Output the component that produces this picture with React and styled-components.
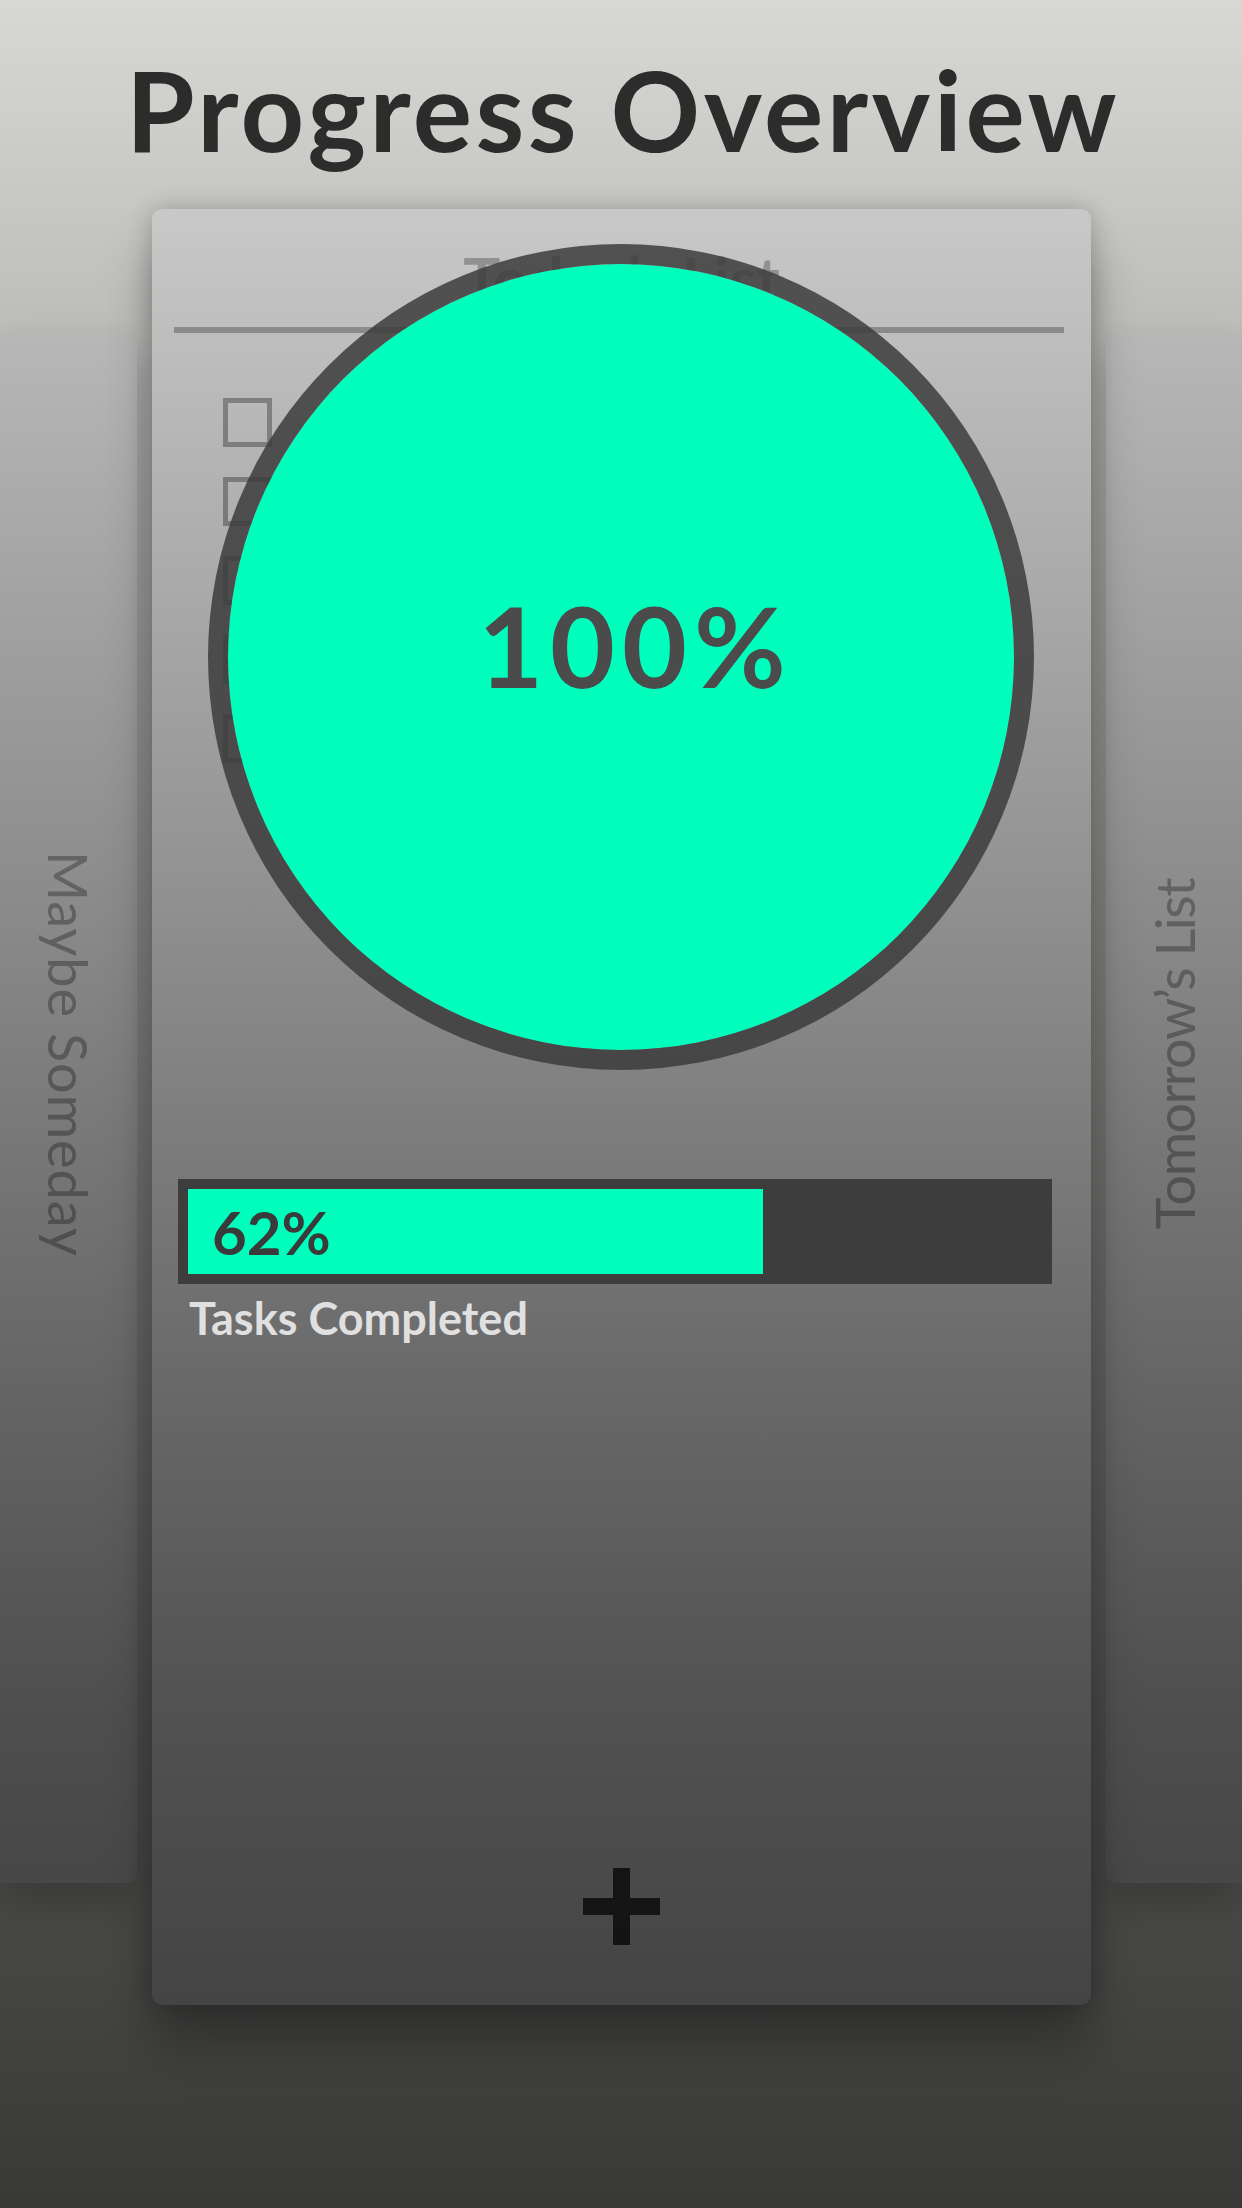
import React from 'react';
import styled, { createGlobalStyle, css } from 'styled-components';

const tasks = ['Buy groceries', 'Call the bank', 'Read a chapter', 'Finish tests', 'Water plants'];
const progress = { label: '62%', fill: 67.3 };

function App() {
  return (
    <>
      <GlobalStyle />
      <Screen>
        <Board>
          <SideCard side="left">
            <SideLabel>Maybe Someday</SideLabel>
          </SideCard>
          <ListCard>
            <ListTitle>Today’s List</ListTitle>
            <Rule />
            <TaskList>
              {tasks.map((t) => (
                <TaskRow key={t}>
                  <CheckBox />
                  <TaskText>{t}</TaskText>
                </TaskRow>
              ))}
            </TaskList>
            <AddButton aria-label="Add task">
              <svg width="77" height="77" viewBox="0 0 77 77">
                <rect x="30" y="0" width="17" height="77" fill="currentColor" />
                <rect x="0" y="30" width="77" height="17" fill="currentColor" />
              </svg>
            </AddButton>
          </ListCard>
          <SideCard side="right">
            <SideLabel flip spacing={-1.5}>Tomorrow’s List</SideLabel>
          </SideCard>
        </Board>

        <Dim />

        <Overview>
          <Heading>Progress Overview</Heading>
          <Ring>
            <Percent>100%</Percent>
          </Ring>
          <Meter>
            <MeterFill style={{ width: `${progress.fill}%` }}>
              <MeterValue>{progress.label}</MeterValue>
            </MeterFill>
          </Meter>
          <MeterLabel>Tasks Completed</MeterLabel>
        </Overview>
      </Screen>
    </>
  );
}

const GlobalStyle = createGlobalStyle`
  html, body {
    margin: 0;
    padding: 0;
  }
  body {
    background: #3a3a38;
    font-family: Lato, "Liberation Sans", sans-serif;
  }
`;

const Screen = styled.div`
  position: relative;
  width: 1242px;
  height: 2208px;
  overflow: hidden;
  background: #dadad6;
`;

const Board = styled.div`
  display: grid;
  grid-template-columns: 137px 1fr 136px;
  column-gap: 15px;
  align-items: start;
  padding-top: 209px;
`;

const SideCard = styled.div`
  margin-top: 124px;
  height: 1550px;
  box-sizing: border-box;
  padding-bottom: 108px;
  background: #d4d4d4;
  box-shadow: 0 20px 40px rgba(0, 0, 0, 0.22);
  display: flex;
  align-items: center;
  justify-content: center;
  ${(p) =>
    p.side === 'left'
      ? css`border-radius: 0 10px 10px 0;`
      : css`border-radius: 10px 0 0 10px;`}
`;

const SideLabel = styled.span`
  writing-mode: vertical-rl;
  font-size: 54px;
  font-weight: 400;
  letter-spacing: ${(p) => (p.spacing !== undefined ? p.spacing : 1)}px;
  color: #959595;
  white-space: nowrap;
  ${(p) =>
    p.flip &&
    css`
      transform: rotate(180deg);
    `}
`;

const ListCard = styled.div`
  position: relative;
  height: 1796px;
  box-sizing: border-box;
  padding: 32px 24px 60px;
  background: #dcdcdc;
  border-radius: 10px;
  box-shadow: 0 0 24px rgba(0, 0, 0, 0.22), 0 40px 50px rgba(0, 0, 0, 0.28);
  display: flex;
  flex-direction: column;
`;

const ListTitle = styled.h2`
  margin: 0;
  text-align: center;
  font-size: 62px;
  font-weight: 700;
  line-height: 1.2;
  color: #a3a3a3;
`;

const Rule = styled.div`
  height: 6px;
  margin: 12px 3px 0 -2px;
  background: #a0a0a0;
`;

const TaskList = styled.div`
  display: flex;
  flex-direction: column;
  gap: 30px;
  margin-top: 65px;
  padding-left: 47px;
`;

const TaskRow = styled.div`
  display: flex;
  align-items: center;
  height: 49px;
`;

const CheckBox = styled.div`
  width: 49px;
  height: 49px;
  box-sizing: border-box;
  border: 5px solid #989898;
  flex-shrink: 0;
`;

const TaskText = styled.span`
  flex: 1;
  text-align: center;
  font-size: 44px;
  color: #555;
`;

const AddButton = styled.button`
  margin-top: auto;
  align-self: center;
  padding: 0;
  border: 0;
  background: none;
  color: #3c3c3c;
  width: 77px;
  height: 77px;
  svg {
    display: block;
  }
`;

const Dim = styled.div`
  position: absolute;
  inset: 0;
  pointer-events: none;
  background: linear-gradient(
    to bottom,
    rgba(0, 0, 0, 0.01) 0%,
    rgba(0, 0, 0, 0.09) 9.5%,
    rgba(0, 0, 0, 0.305) 36%,
    rgba(0, 0, 0, 0.44) 52%,
    rgba(0, 0, 0, 0.52) 62.5%,
    rgba(0, 0, 0, 0.627) 77%,
    rgba(0, 0, 0, 0.69) 90.6%,
    rgba(0, 0, 0, 0.74) 100%
  );
`;

const Overview = styled.div`
  position: absolute;
  inset: 0;
  display: flex;
  flex-direction: column;
  align-items: center;
  padding-top: 43px;
`;

const Heading = styled.h1`
  margin: 0;
  padding-left: 4px;
  font-size: 111px;
  font-weight: 700;
  line-height: 1.2;
  letter-spacing: 3.5px;
  color: #2c2c2c;
`;

const Ring = styled.div`
  margin-top: 68px;
  width: 826px;
  height: 826px;
  box-sizing: border-box;
  border-radius: 50%;
  border: 20px solid rgba(60, 60, 60, 0.85);
  background: #00ffbc;
  background-clip: padding-box;
  display: flex;
  align-items: center;
  justify-content: center;
  padding-bottom: 24px;
`;

const Percent = styled.span`
  padding-left: 29px;
  font-size: 112px;
  font-weight: 700;
  line-height: 1;
  letter-spacing: 7px;
  color: #4b4b4b;
`;

const Meter = styled.div`
  align-self: flex-start;
  margin: 109px 0 0 178px;
  width: 874px;
  height: 105px;
  box-sizing: border-box;
  padding: 10px;
  background: #3d3d3d;
`;

const MeterFill = styled.div`
  height: 100%;
  box-sizing: border-box;
  padding-left: 24px;
  background: #00ffbc;
  display: flex;
  align-items: center;
`;

const MeterValue = styled.span`
  font-size: 60px;
  font-weight: 700;
  line-height: 1;
  color: #3a3a3a;
`;

const MeterLabel = styled.div`
  align-self: flex-start;
  margin: 7px 0 0 189px;
  font-size: 45px;
  font-weight: 700;
  line-height: 1.2;
  color: #e0e0e0;
`;

export default App;
